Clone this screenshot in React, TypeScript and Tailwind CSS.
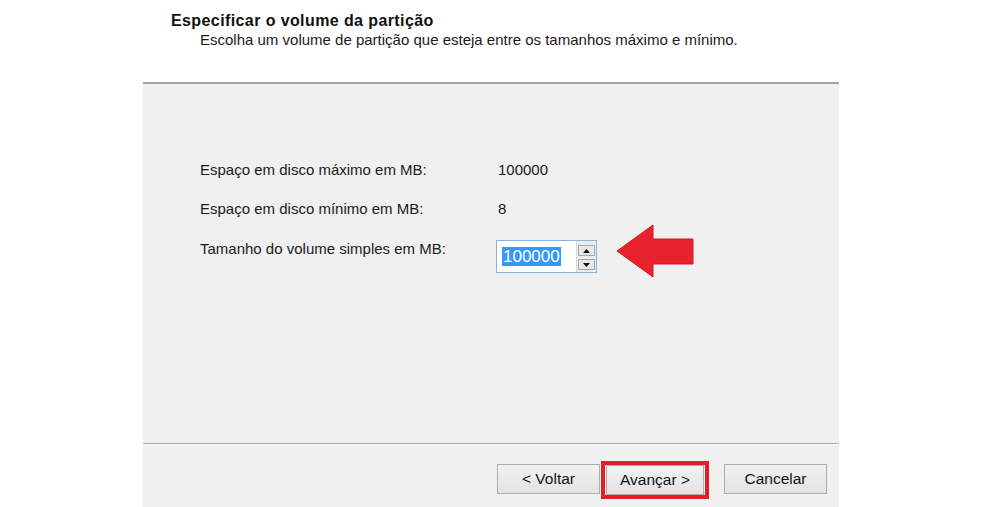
import React from 'react';

const rows = [
  { label: 'Espaço em disco máximo em MB:', value: '100000' },
  { label: 'Espaço em disco mínimo em MB:', value: '8' },
];

const DialogButton: React.FC<{ label: string; className?: string }> = ({ label, className = '' }) => (
  <button
    className={`h-[30px] border border-[#acacac] bg-gradient-to-b from-[#f2f2f2] to-[#e3e3e3] text-[15.5px] text-[#141414] leading-none ${className}`}
  >
    {label}
  </button>
);

const RedArrow = () => (
  <svg width="80" height="56" viewBox="0 0 80 56" className="ml-[18px] -mt-[16px] shrink-0">
    <polygon
      points="2,28 38,2 38,16 78,16 78,41 38,41 38,54"
      fill="#e8222a"
      stroke="#d01820"
      strokeWidth="1"
      strokeLinejoin="miter"
    />
  </svg>
);

const SpinInput = () => (
  <div className="flex h-[33px] w-[101px] border border-[#8fb2dd] bg-white">
    <div className="flex flex-1 items-center pl-[5px]">
      <span className="bg-[#3399ff] px-px text-[17px] leading-[19px] text-white">100000</span>
    </div>
    <div className="flex w-[20px] flex-col gap-[3px] border-l border-[#d9d9d9] bg-[#ececec] px-[1px] pt-[4px]">
      <div className="flex h-[11px] items-center justify-center border border-[#a9a9a9] bg-[#e8e8e8]">
        <svg width="7" height="4" viewBox="0 0 7 4">
          <polygon points="3.5,0 7,4 0,4" fill="#111" />
        </svg>
      </div>
      <div className="flex h-[11px] items-center justify-center border border-[#a9a9a9] bg-[#e8e8e8]">
        <svg width="7" height="4" viewBox="0 0 7 4">
          <polygon points="0,0 7,0 3.5,4" fill="#111" />
        </svg>
      </div>
    </div>
  </div>
);

export default function App() {
  return (
    <div className="flex h-[507px] w-[984px] flex-col overflow-hidden bg-white font-['Liberation_Sans',Arial,sans-serif] text-[#1b1b1b]">
      <header className="h-[82px] shrink-0 pl-[171px] pt-[12px]">
        <h1 className="text-[16px] font-bold leading-[18px] tracking-[0.4px] text-[#111]">Especificar o volume da partição</h1>
        <p className="ml-[29px] text-[15px] leading-[20px]">
          Escolha um volume de partição que esteja entre os tamanhos máximo e mínimo.
        </p>
      </header>

      <div className="ml-[143px] flex w-[696px] flex-1 flex-col border-t-2 border-[#a3a3a3] bg-[#f0f0f0]">
        <div className="flex h-[359px] flex-col pl-[57px] pt-[76px]">
          {rows.map((row, i) => (
            <div key={row.label} className={`flex text-[15px] leading-[20px] ${i === 1 ? 'mt-[19px]' : ''}`}>
              <span className="w-[298px]">{row.label}</span>
              <span>{row.value}</span>
            </div>
          ))}
          <div className="mt-[20px] flex items-start text-[15px] leading-[20px]">
            <span className="w-[296px]">Tamanho do volume simples em MB:</span>
            <div className="mt-px">
              <SpinInput />
            </div>
            <RedArrow />
          </div>
        </div>

        <div className="h-[2px] border-t border-[#ababab] bg-[#f7f7f7]" />

        <div className="flex items-start justify-end pr-[12px] pt-[16px]">
          <DialogButton label="< Voltar" className="mt-[3px] w-[103px]" />
          <div className="ml-px border-4 border-[#e41e26] px-px">
            <DialogButton label="Avançar >" className="h-[28px] w-[98px]" />
          </div>
          <DialogButton label="Cancelar" className="ml-[15px] mt-[3px] w-[103px]" />
        </div>
      </div>
    </div>
  );
}
